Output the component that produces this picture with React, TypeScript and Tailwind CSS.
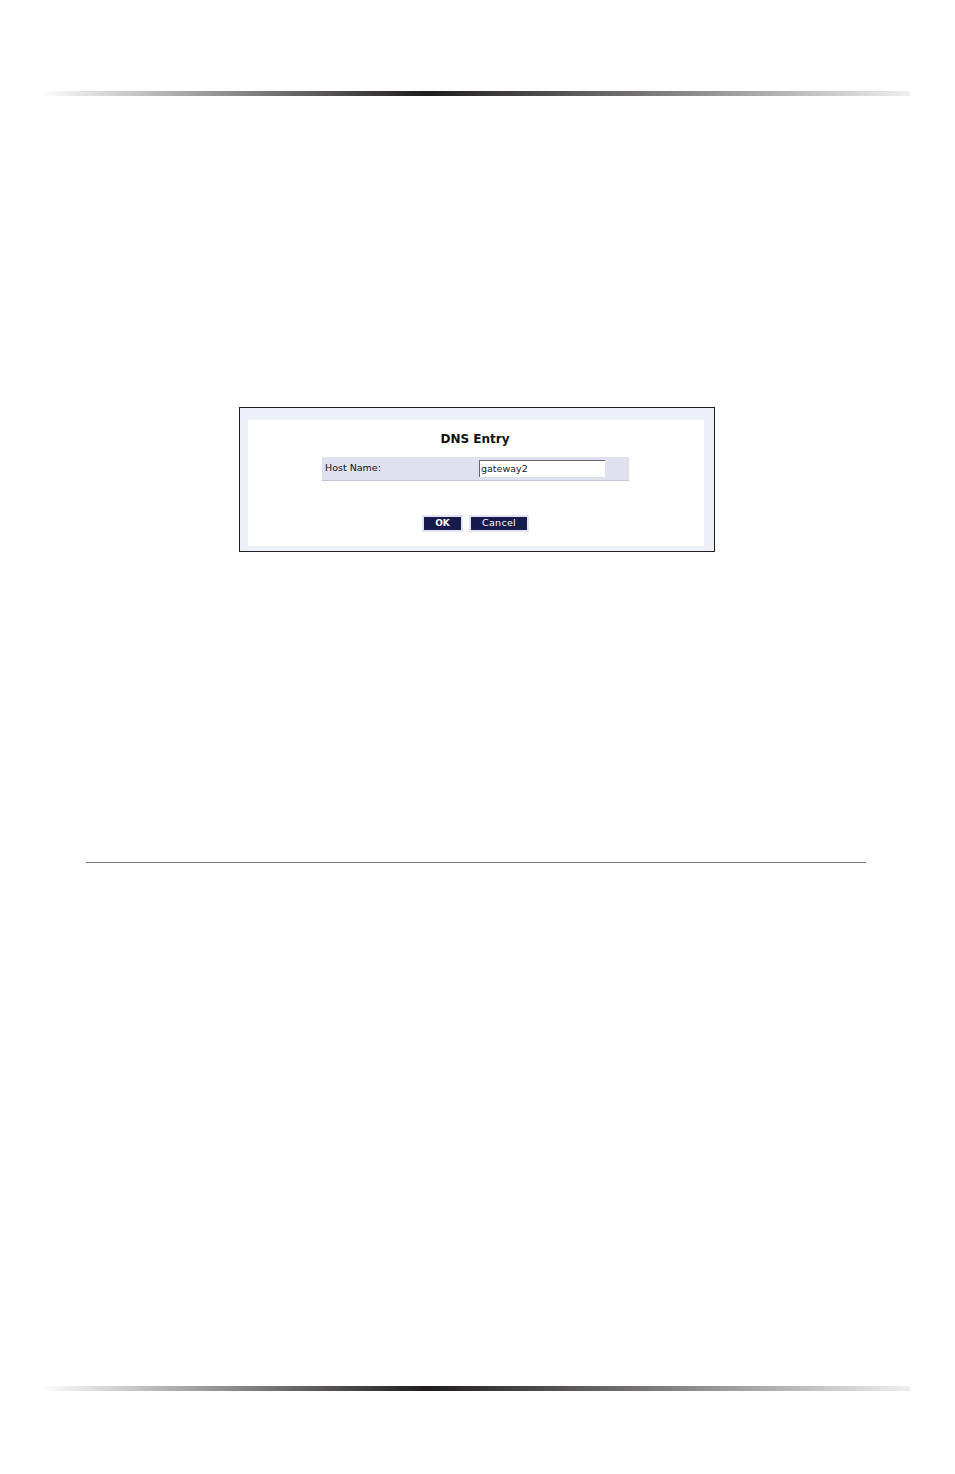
export default function App() {
  return (
    <div className="flex flex-col bg-white h-[1474px] pt-[91px] font-['DejaVu_Sans',sans-serif]">
      <div className="ml-[45px] w-[865px] h-[5px] bg-[linear-gradient(to_right,#fbfbfb_0%,#8a8889_22%,#1e1c1d_44%,#7a7879_70%,#efefef_100%)]" />

      <div className="mt-[311px] ml-[239px] w-[476px] h-[145px] border border-[#231f20] bg-[#eef0f7] flex pt-[12px] pl-[8px] pr-[10px] pb-[5px]">
        <div className="flex-1 bg-white flex flex-col items-center">
          <h2 className="mt-[12px] text-[12px] leading-[14px] font-bold text-[#111] ml-[-2px]">DNS Entry</h2>
          <div className="mt-[11px] ml-[-1px] w-[307px] h-[24px] bg-[#dfe2ee] border-b border-[#c4c7d2] flex items-center">
            <span className="ml-[3px] w-[154px] text-[9.5px] text-[#111]">Host Name:</span>
            <div className="w-[126px] h-[17px] bg-white border-t border-l border-[#666] flex items-center pl-[1px] text-[9.5px] text-[#222]">
              gateway2
            </div>
          </div>
          <div className="mt-[34px] flex gap-[6px] ml-[-1px]">
            <div className="p-[2px] bg-[#e2e5f1]">
              <div className="w-[37px] h-[13px] bg-[#161a4c] text-white text-[9px] font-bold flex items-center justify-center">OK</div>
            </div>
            <div className="p-[2px] bg-[#e2e5f1]">
              <div className="w-[56px] h-[13px] bg-[#161a4c] text-white text-[9.5px] tracking-[0.3px] flex items-center justify-center">Cancel</div>
            </div>
          </div>
        </div>
      </div>

      <div className="mt-[310px] ml-[86px] w-[780px] h-[1px] bg-[#777]" />

      <div className="mt-[523px] ml-[45px] w-[865px] h-[5px] bg-[linear-gradient(to_right,#fbfbfb_0%,#8a8889_22%,#1e1c1d_44%,#7a7879_70%,#efefef_100%)]" />
    </div>
  )
}
